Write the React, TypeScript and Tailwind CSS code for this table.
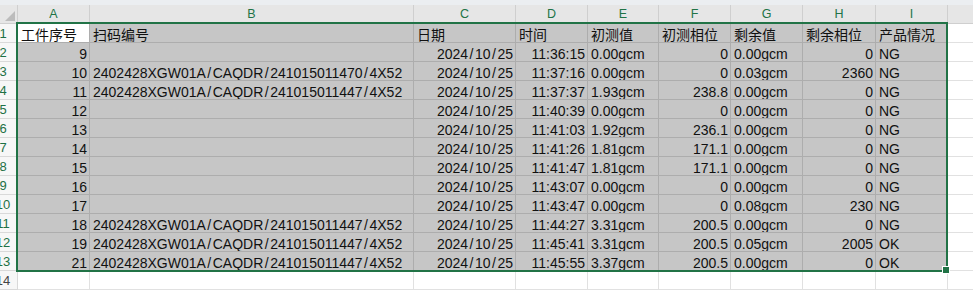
import React from "react";

type Align = "l" | "r";
const widths = [72, 324, 102, 72, 71, 72, 72, 73, 72];
const letters = ["A", "B", "C", "D", "E", "F", "G", "H", "I"];
const aligns: Align[] = ["r", "l", "r", "r", "l", "r", "l", "r", "l"];

const header = ["工件序号", "扫码编号", "日期", "时间", "初测值", "初测相位", "剩余值", "剩余相位", "产品情况"];
const c70 = "2402428XGW01A/CAQDR/241015011470/4X52";
const c47 = "2402428XGW01A/CAQDR/241015011447/4X52";
const D = "2024/10/25";
const data: string[][] = [
  ["9", "", D, "11:36:15", "0.00gcm", "0", "0.00gcm", "0", "NG"],
  ["10", c70, D, "11:37:16", "0.00gcm", "0", "0.03gcm", "2360", "NG"],
  ["11", c47, D, "11:37:37", "1.93gcm", "238.8", "0.00gcm", "0", "NG"],
  ["12", "", D, "11:40:39", "0.00gcm", "0", "0.00gcm", "0", "NG"],
  ["13", "", D, "11:41:03", "1.92gcm", "236.1", "0.00gcm", "0", "NG"],
  ["14", "", D, "11:41:26", "1.81gcm", "171.1", "0.00gcm", "0", "NG"],
  ["15", "", D, "11:41:47", "1.81gcm", "171.1", "0.00gcm", "0", "NG"],
  ["16", "", D, "11:43:07", "0.00gcm", "0", "0.00gcm", "0", "NG"],
  ["17", "", D, "11:43:47", "0.00gcm", "0", "0.08gcm", "230", "NG"],
  ["18", c47, D, "11:44:27", "3.31gcm", "200.5", "0.00gcm", "0", "NG"],
  ["19", c47, D, "11:45:41", "3.31gcm", "200.5", "0.05gcm", "2005", "OK"],
  ["21", c47, D, "11:45:55", "3.37gcm", "200.5", "0.00gcm", "0", "OK"],
];

function Txt({ text }: { text: string }) {
  const parts = text.split("/");
  return (
    <span className="leading-[14px]">
      {parts.map((p, i) => (
        <React.Fragment key={i}>
          {i > 0 && <span className="px-[1.5px]">/</span>}
          {p}
        </React.Fragment>
      ))}
    </span>
  );
}

function RowHead({ n, last }: { n: number; last?: boolean }) {
  return (
    <div
      className={
        "w-[18px] shrink-0 h-full overflow-hidden flex justify-end items-end bg-[#f7f7f7] border-r border-b border-[#d9d9d9] " +
        (last ? "text-[#444444]" : "text-[#1e7145]")
      }
    >
      <div className="w-[28px] shrink-0 text-center text-[13px] leading-[15px] pb-[1px]">{n}</div>
    </div>
  );
}

function Cell({
  text,
  w,
  align,
  sel,
  active,
}: {
  text: string;
  w: number;
  align: Align;
  sel: boolean;
  active?: boolean;
}) {
  const bg = active ? "bg-white border-[#adadad]" : sel ? "bg-[#c6c6c6] border-[#adadad]" : "bg-white border-[#e1e1e1]";
  return (
    <div
      style={{ width: w }}
      className={
        "shrink-0 h-full border-r border-b flex items-end overflow-hidden whitespace-nowrap pl-[3px] pr-[2px] " +
        bg +
        (align === "r" ? " justify-end" : " justify-start")
      }
    >
      <Txt text={text} />
    </div>
  );
}

export default function App() {
  return (
    <div className="relative w-[973px] h-[291px] overflow-hidden bg-white text-[14px] text-[#111111] font-['Liberation_Sans','Noto_Sans_CJK_SC',sans-serif]">
      <div className="h-[5px] bg-[#ebeef1]" />
      {/* column header */}
      <div className="flex h-[19px] bg-[#e6e6e6] border-b border-[#cfcfcf]">
        <div className="w-[18px] shrink-0 h-full border-r border-[#cfcfcf] relative">
          <svg width="18" height="18" className="absolute left-0 top-0">
            <polygon points="15,6 15,16 5,16" fill="#bcbcbc" />
          </svg>
        </div>
        {letters.map((l, i) => (
          <div
            key={l}
            style={{ width: widths[i] }}
            className="shrink-0 h-full border-r border-[#cfcfcf] flex items-end justify-center text-[12.5px] leading-[15px] pb-[1px] text-[#217346]"
          >
            {l}
          </div>
        ))}
        <div className="flex-1" />
      </div>
      {/* row 1 */}
      <div className="flex h-[19px]">
        <RowHead n={1} />
        {header.map((h, i) => (
          <Cell key={i} text={h} w={widths[i]} align="l" sel active={i === 0} />
        ))}
        <div className="flex-1 h-full border-b border-[#e1e1e1]" />
      </div>
      {data.map((r, ri) => (
        <div key={ri} className="flex h-[19px]">
          <RowHead n={ri + 2} />
          {r.map((t, i) => (
            <Cell key={i} text={t} w={widths[i]} align={aligns[i]} sel />
          ))}
          <div className="flex-1 h-full border-b border-[#e1e1e1]" />
        </div>
      ))}
      {/* row 14 */}
      <div className="flex h-[19px]">
        <RowHead n={14} last />
        {widths.map((w, i) => (
          <Cell key={i} text="" w={w} align="l" sel={false} />
        ))}
        <div className="flex-1 h-full border-b border-[#e1e1e1]" />
      </div>
      {/* selection border */}
      <div className="absolute left-[16px] top-[22px] w-[932px] h-[250px] border-2 border-[#217346] pointer-events-none" />
      <div className="absolute left-[943px] top-[267px] w-[6px] h-[6px] bg-[#217346] outline outline-1 outline-white" />
    </div>
  );
}
